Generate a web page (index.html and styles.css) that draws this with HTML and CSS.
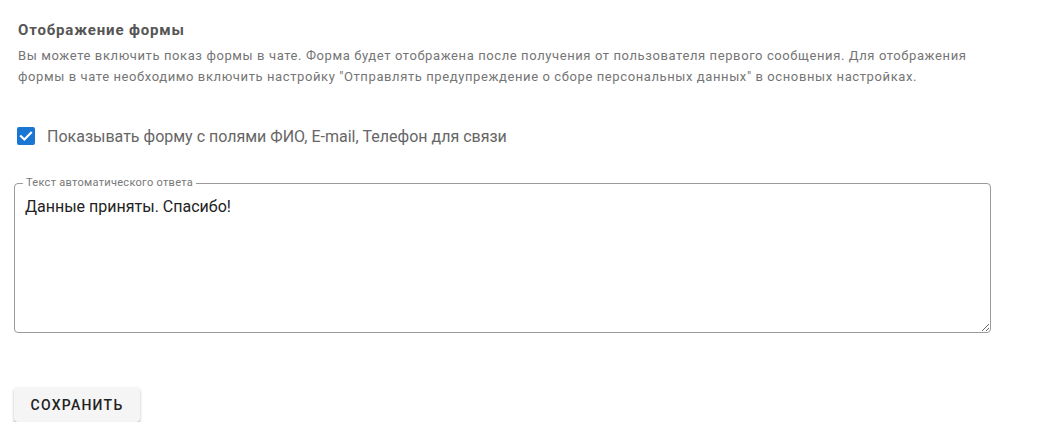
FILE: index.html
```html
<!DOCTYPE html>
<html lang="ru">
<head>
<meta charset="utf-8">
<title>Отображение формы</title>
<link rel="stylesheet" href="styles.css">
</head>
<body>
<div class="page">
  <section class="section">
    <h3 class="title">Отображение формы</h3>
    <p class="desc">Вы можете включить показ формы в чате. Форма будет отображена после получения от пользователя первого сообщения. Для отображения формы в чате необходимо включить настройку "Отправлять предупреждение о сборе персональных данных" в основных настройках.</p>
  </section>
  <label class="check">
    <span class="box">
      <svg viewBox="0 0 18 18" width="18" height="18"><path d="M4 9.2 L7.4 12.5 L14 5.8" fill="none" stroke="#fff" stroke-width="2.2" stroke-linecap="square"/></svg>
    </span>
    <span class="check-label">Показывать форму с полями ФИО, E-mail, Телефон для связи</span>
  </label>
  <fieldset class="field">
    <legend class="legend">Текст автоматического ответа</legend>
    <textarea class="area">Данные приняты. Спасибо!</textarea>
  </fieldset>
  <div class="actions">
    <button class="btn" type="button">Сохранить</button>
  </div>
</div>
</body>
</html>
```
FILE: styles.css
```css
html, body {
  margin: 0;
  padding: 0;
  background: #fff;
}
body {
  font-family: Roboto, "Liberation Sans", sans-serif;
}
.page {
  padding: 20px 0 0 14px;
  width: 977px;
}
.section {
  padding-left: 4px;
}
.title {
  margin: 0;
  font-size: 15px;
  font-weight: 700;
  letter-spacing: 0.85px;
  color: #555;
  line-height: 20px;
}
.desc {
  margin: 5px 0 0 0;
  font-size: 13px;
  letter-spacing: 0.6px;
  line-height: 21px;
  color: #757575;
}
.check {
  display: flex;
  align-items: center;
  gap: 12px;
  margin-top: 39px;
  padding-left: 3px;
  height: 20px;
}
.box {
  width: 18px;
  height: 18px;
  border-radius: 2px;
  background: #1976d2;
  display: flex;
}
.check-label {
  font-size: 16px;
  color: #666;
}
.field {
  margin: 31px 0 0 0;
  padding: 0 0 0 10px;
  border: 1px solid #9a9a9a;
  border-radius: 4px;
  height: 154px;
  display: flex;
}
.legend {
  font-size: 11px;
  letter-spacing: 0.3px;
  color: #777;
  padding: 0 3px 0 3px;
  margin-left: -2px;
  line-height: 12px;
}
.area {
  flex: 1;
  border: none;
  outline: none;
  resize: both;
  font-family: Roboto, "Liberation Sans", sans-serif;
  font-size: 16px;
  color: #222;
  padding: 8px 0 0 0;
  margin: 0;
  line-height: 20px;
  background: transparent;
}
.actions {
  margin-top: 54px;
}
.btn {
  font-family: Roboto, "Liberation Sans", sans-serif;
  font-size: 14px;
  font-weight: 500;
  letter-spacing: 1.25px;
  text-transform: uppercase;
  color: #222;
  background: #f5f5f5;
  border: none;
  border-radius: 4px;
  height: 35px;
  width: 126px;
  box-shadow: 0 2px 3px rgba(0,0,0,0.25), 0 1px 1px rgba(0,0,0,0.1);
}
```
